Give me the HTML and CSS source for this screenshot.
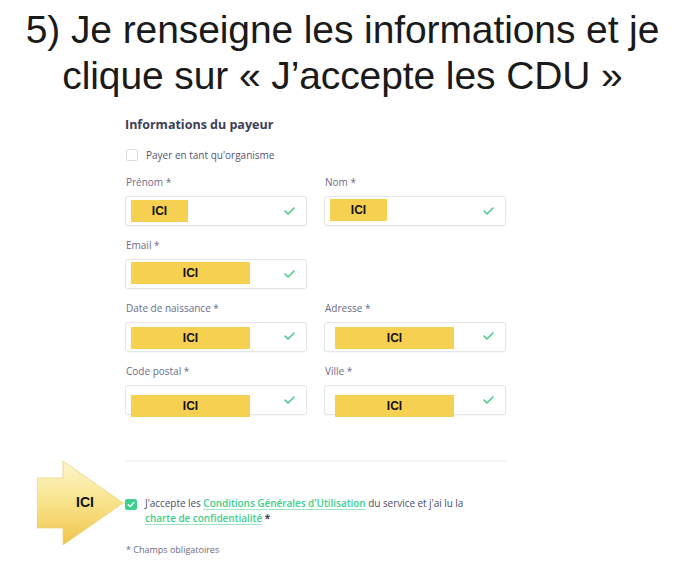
FILE: index.html
```html
<!DOCTYPE html>
<html lang="fr">
<head>
<meta charset="utf-8">
<title>Informations du payeur</title>
<link rel="stylesheet" href="styles.css">
</head>
<body>
<header class="title">
  <h1>5) Je renseigne les informations et je<br>clique sur « J’accepte les CDU »</h1>
</header>
<main class="form">
  <h2 class="form-title">Informations du payeur</h2>
  <label class="org-row"><span class="box"></span>Payer en tant qu'organisme</label>
  <div class="grid">
    <div class="field">
      <span class="label">Prénom *</span>
      <div class="input"><span class="hl hl-short hl-t4">ICI</span><svg class="ok" viewBox="0 0 11 8"><path d="M1 4 L4 7 L10 1"/></svg></div>
    </div>
    <div class="field">
      <span class="label">Nom *</span>
      <div class="input"><span class="hl hl-short hl-t2">ICI</span><svg class="ok" viewBox="0 0 11 8"><path d="M1 4 L4 7 L10 1"/></svg></div>
    </div>
    <div class="field">
      <span class="label">Email *</span>
      <div class="input"><span class="hl hl-long hl-t3">ICI</span><svg class="ok" viewBox="0 0 11 8"><path d="M1 4 L4 7 L10 1"/></svg></div>
    </div>
    <div class="field empty"></div>
    <div class="field">
      <span class="label">Date de naissance *</span>
      <div class="input"><span class="hl hl-long hl-t5">ICI</span><svg class="ok ok-up" viewBox="0 0 11 8"><path d="M1 4 L4 7 L10 1"/></svg></div>
    </div>
    <div class="field">
      <span class="label">Adresse *</span>
      <div class="input"><span class="hl hl-long hl-in hl-t5">ICI</span><svg class="ok ok-up" viewBox="0 0 11 8"><path d="M1 4 L4 7 L10 1"/></svg></div>
    </div>
    <div class="field">
      <span class="label">Code postal *</span>
      <div class="input"><span class="hl hl-long hl-t10">ICI</span><svg class="ok" viewBox="0 0 11 8"><path d="M1 4 L4 7 L10 1"/></svg></div>
    </div>
    <div class="field">
      <span class="label">Ville *</span>
      <div class="input"><span class="hl hl-long hl-in hl-t10">ICI</span><svg class="ok" viewBox="0 0 11 8"><path d="M1 4 L4 7 L10 1"/></svg></div>
    </div>
  </div>
  <div class="divider"></div>
  <div class="accept">
    <svg class="arrow" viewBox="0 0 86 84">
      <defs>
        <linearGradient id="ag" x1="0" y1="0" x2="0" y2="1">
          <stop offset="0" stop-color="#fdf6cf"/>
          <stop offset="0.45" stop-color="#f9e590"/>
          <stop offset="1" stop-color="#f0c44a"/>
        </linearGradient>
      </defs>
      <polygon points="0,17 26,17 26,0 86,42 26,84 26,67 0,67" fill="url(#ag)" stroke="#ecd27a" stroke-width="0.8"/>
      <text x="48" y="46" text-anchor="middle" class="arrow-text">ICI</text>
    </svg>
    <span class="tick"><svg viewBox="0 0 12 11"><path d="M3.2 5.8 L5.2 7.6 L8.8 3.6"/></svg></span>
    <p class="accept-text">J'accepte les <a href="#">Conditions Générales d'Utilisation</a> du service et j'ai lu la<br><a href="#">charte de confidentialité</a> <b>*</b></p>
  </div>
  <p class="note">* Champs obligatoires</p>
</main>
</body>
</html>
```

FILE: styles.css
```css
* { box-sizing: border-box; }
html, body { margin: 0; padding: 0; background: #ffffff; }
body { width: 675px; height: 565px; overflow: hidden; }

.title { padding: 7px 0 0 10px; }
.title h1 {
  margin: 0;
  font-family: "Liberation Sans", Arial, sans-serif;
  font-weight: 400;
  font-size: 39px;
  line-height: 46px;
  text-align: center;
  color: #1a1a1a;
  letter-spacing: -0.1px;
}

.form {
  margin: 18px 0 0 125px;
  width: 381px;
  font-family: "Open Sans", "Noto Sans", sans-serif;
  color: #6a6a88;
}
.form-title {
  margin: 0;
  font-size: 12.5px;
  line-height: 16px;
  font-weight: 700;
  color: #3d3d57;
}
.org-row {
  display: flex;
  align-items: center;
  gap: 8px;
  margin-top: 15px;
  font-size: 10px;
  line-height: 14px;
  color: #55556f;
}
.box {
  width: 12px;
  height: 12px;
  border: 1px solid #dcdce4;
  border-radius: 2px;
  background: #fff;
  margin-left: 1px;
}

.grid {
  margin-top: 13px;
  display: grid;
  grid-template-columns: 182px 182px;
  column-gap: 17px;
  row-gap: 12px;
}
.field { display: flex; flex-direction: column; gap: 7px; }
.field.empty { min-height: 51px; }
.label {
  font-size: 10px;
  line-height: 14px;
  color: #6b6b88;
  padding-left: 1px;
}
.input {
  height: 30px;
  border: 1px solid #e4e4ea;
  border-radius: 3px;
  background: #fff;
  box-shadow: 0 1px 1px rgba(0, 0, 0, 0.03);
  display: flex;
  align-items: flex-start;
}
.hl {
  display: flex;
  align-items: center;
  justify-content: center;
  height: 22px;
  margin-left: 5px;
  background: #f6d050;
  font-family: "Liberation Sans", Arial, sans-serif;
  font-weight: 700;
  font-size: 12px;
  color: #111111;
}
.hl-short { width: 57px; }
.hl-long { width: 119px; }
.hl-in { margin-left: 10px; }
.hl-t2 { margin-top: 2px; }
.hl-t3 { margin-top: 2px; }
.hl-t4 { margin-top: 3px; }
.hl-t5 { margin-top: 4px; }
.hl-t10 { margin-top: 9px; }

.ok {
  width: 11px;
  height: 8px;
  margin: 0 11px 0 auto;
  align-self: center;
  fill: none;
  stroke: #43c98a;
  stroke-width: 1.5;
  stroke-linecap: round;
  stroke-linejoin: round;
}
.ok-up { margin-top: -3px; }

.divider {
  margin-top: 45px;
  height: 2px;
  background: #f4f4f6;
}

.accept {
  position: relative;
  margin-top: 34px;
  display: flex;
  align-items: flex-start;
  gap: 8px;
}
.arrow {
  position: absolute;
  left: -88px;
  top: -35px;
  width: 86px;
  height: 84px;
}
.arrow-text {
  font-family: "Liberation Sans", Arial, sans-serif;
  font-weight: 700;
  font-size: 14px;
  fill: #111111;
}
.tick {
  flex: none;
  width: 12px;
  height: 11px;
  margin-top: 3px;
  border-radius: 2px;
  background: #3fcf8c;
  display: flex;
}
.tick svg {
  width: 12px;
  height: 11px;
  fill: none;
  stroke: #ffffff;
  stroke-width: 1.4;
  stroke-linecap: round;
  stroke-linejoin: round;
}
.accept-text {
  margin: 0;
  font-size: 10px;
  line-height: 15px;
  color: #4b4b68;
  letter-spacing: -0.05px;
}
.accept-text a {
  color: #3ecf8e;
  font-weight: 600;
  text-decoration: underline;
  text-underline-offset: 2px;
  text-decoration-color: #9be6c2;
}
.accept-text b { font-weight: 700; color: #3d3d57; }

.note {
  margin: 18px 0 0;
  font-size: 9px;
  line-height: 12px;
  color: #6b6b80;
  padding-left: 1px;
}
```
